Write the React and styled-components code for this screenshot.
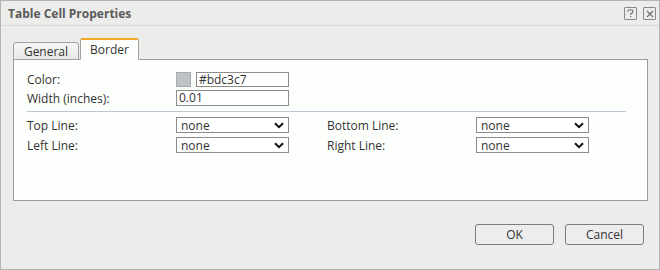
import React from "react";
import styled, { createGlobalStyle } from "styled-components";

const Global = createGlobalStyle`
  html, body { margin: 0; padding: 0; }
  body { font-family: "Open Sans", "Noto Sans", sans-serif; font-size: 12px; color: #333; background: #ecedeb; }
`;

const Dialog = styled.div`
  box-sizing: border-box;
  width: 660px;
  height: 270px;
  border: 1px solid #b4b5b3;
  background: #ecedeb;
  display: flex;
  flex-direction: column;
`;

const TitleBar = styled.div`
  height: 23px;
  border-bottom: 1px solid #d9dad8;
  display: flex;
  align-items: center;
  justify-content: space-between;
  padding: 1px 3px 0 7px;
`;

const Title = styled.div`
  font-weight: bold;
  font-size: 12px;
  color: #5a5a5a;
`;

const IconRow = styled.div`
  display: flex;
  gap: 6px;
`;

const IconBtn = styled.div`
  box-sizing: border-box;
  width: 13px;
  height: 13px;
  border: 1px solid #8a8a8a;
  border-radius: 1px;
  display: flex;
  align-items: center;
  justify-content: center;
  font-size: 10px;
  line-height: 1;
  color: #6a6a6a;
`;

const Body = styled.div`
  padding: 12px 12px 0 12px;
  display: flex;
  flex-direction: column;
`;

const Tabs = styled.div`
  display: flex;
  align-items: flex-end;
  height: 22px;
  gap: 1px;
  margin-bottom: -1px;
  position: relative;
  z-index: 1;
`;

const Tab = styled.div`
  box-sizing: border-box;
  height: ${(p) => (p.$active ? "22px" : "18px")};
  width: ${(p) => p.$w}px;
  border: 1px solid #a0a2a0;
  border-bottom: ${(p) => (p.$active ? "1px solid #fdfffd" : "1px solid #a0a2a0")};
  border-top: ${(p) => (p.$active ? "2px solid #f5a623" : "1px solid #a0a2a0")};
  border-radius: 3px 3px 0 0;
  background: ${(p) => (p.$active ? "#fdfffd" : "linear-gradient(#f6f7f5, #e8e9e7)")};
  display: flex;
  align-items: center;
  justify-content: center;
  font-size: 12px;
  color: #333;
  padding-top: ${(p) => (p.$active ? "0" : "1px")};
`;

const Panel = styled.div`
  box-sizing: border-box;
  width: 635px;
  height: 142px;
  border: 1px solid #9a9c9a;
  background: #fdfffd;
  padding: 12px 21px 0 13px;
`;

const Grid = styled.div`
  display: grid;
  grid-template-columns: 149px 113px;
  row-gap: 3px;
  align-items: center;
`;

const Label = styled.div`
  font-size: 12px;
  color: #333;
  line-height: 15px;
`;

const ColorCell = styled.div`
  display: flex;
  gap: 5px;
  align-items: center;
`;

const Swatch = styled.div`
  box-sizing: border-box;
  width: 15px;
  height: 15px;
  background: #bdc3c7;
  border: 1px solid #a6abae;
`;

const TextInput = styled.div`
  box-sizing: border-box;
  width: ${(p) => p.$w}px;
  height: ${(p) => p.$h || 15}px;
  border: 1px solid #8c8c8c;
  background: #fff;
  font-size: 12px;
  line-height: 13px;
  padding-left: 2px;
  color: #333;
`;

const Divider = styled.div`
  height: 1px;
  background: #bfc8d2;
  margin: 5px 0 5px 0;
`;

const LineGrid = styled.div`
  display: grid;
  grid-template-columns: 149px 113px 38px 149px 113px;
  row-gap: 4px;
  align-items: center;
`;

const Select = styled.div`
  box-sizing: border-box;
  width: 113px;
  height: 16px;
  border: 1px solid #8c8c8c;
  background: #fff;
  display: flex;
  align-items: center;
  justify-content: space-between;
  padding: 0 4px 0 4px;
  font-size: 12px;
  color: #333;
`;

const Footer = styled.div`
  display: flex;
  justify-content: flex-end;
  gap: 11px;
  padding: 23px 15px 0 0;
`;

const Button = styled.div`
  box-sizing: border-box;
  width: 79px;
  height: 21px;
  border: 1px solid #7c7c7c;
  border-radius: 3px;
  background: #ededed;
  display: flex;
  align-items: center;
  justify-content: center;
  font-size: 12px;
  color: #333;
`;

const Chevron = () => (
  <svg width="10" height="7" viewBox="0 0 10 7">
    <path d="M1 1.2 L5 5.2 L9 1.2" fill="none" stroke="#111" strokeWidth="2" />
  </svg>
);

const Help = () => (
  <svg width="7" height="9" viewBox="0 0 7 9">
    <path d="M1 2.5 Q1 0.8 3.5 0.8 Q6 0.8 6 2.6 Q6 3.8 4.3 4.6 Q3.5 5 3.5 6" fill="none" stroke="#6a6a6a" strokeWidth="1.1" />
    <rect x="3" y="7" width="1.2" height="1.3" fill="#6a6a6a" />
  </svg>
);

const Close = () => (
  <svg width="8" height="8" viewBox="0 0 8 8">
    <path d="M1 1 L7 7 M7 1 L1 7" stroke="#6a6a6a" strokeWidth="1.1" />
  </svg>
);

const rows = [
  ["Top Line:", "Bottom Line:"],
  ["Left Line:", "Right Line:"],
];

export default function App() {
  return (
    <>
      <Global />
      <Dialog>
        <TitleBar>
          <Title>Table Cell Properties</Title>
          <IconRow>
            <IconBtn><Help /></IconBtn>
            <IconBtn><Close /></IconBtn>
          </IconRow>
        </TitleBar>
        <Body>
          <Tabs>
            <Tab $w={66}>General</Tab>
            <Tab $w={59} $active>Border</Tab>
          </Tabs>
          <Panel>
            <Grid>
              <Label>Color:</Label>
              <ColorCell>
                <Swatch />
                <TextInput $w={94}>#bdc3c7</TextInput>
              </ColorCell>
              <Label>Width (inches):</Label>
              <TextInput $w={113} $h={16}>0.01</TextInput>
            </Grid>
            <Divider />
            <LineGrid>
              {rows.map(([a, b]) => (
                <React.Fragment key={a}>
                  <Label>{a}</Label>
                  <Select>none<Chevron /></Select>
                  <span />
                  <Label>{b}</Label>
                  <Select>none<Chevron /></Select>
                </React.Fragment>
              ))}
            </LineGrid>
          </Panel>
        </Body>
        <Footer>
          <Button>OK</Button>
          <Button>Cancel</Button>
        </Footer>
      </Dialog>
    </>
  );
}
